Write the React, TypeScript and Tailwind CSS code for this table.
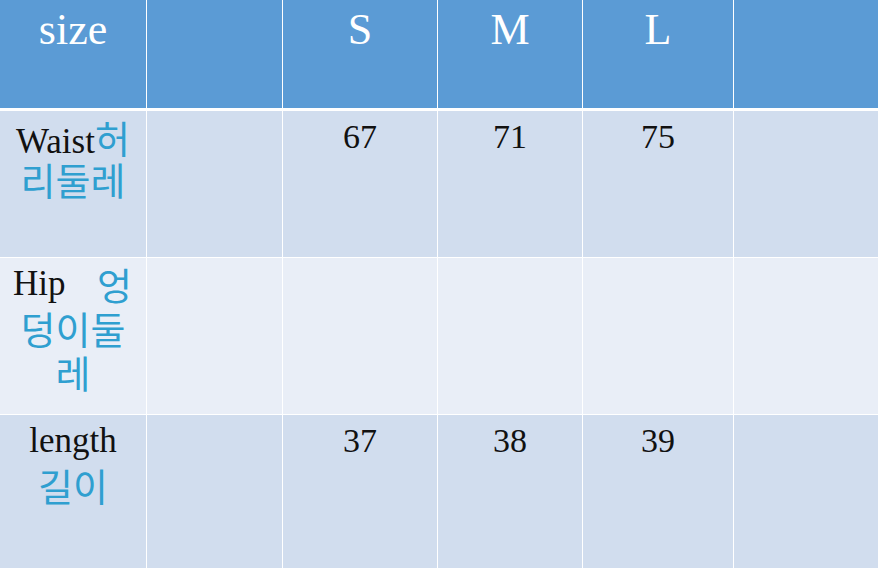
const COLS = 'grid grid-cols-[146px_135px_154px_144px_150px_1fr] gap-x-px';

const serif = "font-['Liberation_Serif','Times_New_Roman',serif]";
const kr = "font-['Noto_Sans_CJK_KR',sans-serif] text-[38px] text-[#2f9fd0]";

interface RowProps {
  label: React.ReactNode;
  values: string[];
  bg: string;
  height: string;
}

function BodyRow({ label, values, bg, height }: RowProps) {
  return (
    <div className={`${COLS} ${height}`}>
      <div className={`${bg} pt-[4px] text-center text-[35px] leading-[44px] text-[#111]`}>{label}</div>
      <div className={bg} />
      {values.map((v, i) => (
        <div key={i} className={`${bg} pt-[4px] text-center text-[34px] leading-[44px] text-[#111] ${serif}`}>
          {v}
        </div>
      ))}
      <div className={bg} />
    </div>
  );
}

export default function App() {
  const header = ['size', '', 'S', 'M', 'L', ''];

  return (
    <div className="flex h-[568px] w-[878px] flex-col overflow-hidden bg-white">
      <div className={`${COLS} mb-[3px] h-[108px]`}>
        {header.map((h, i) => (
          <div
            key={i}
            className={`bg-[#5b9bd5] pt-[8px] text-center text-[44px] leading-[44px] text-white ${serif}`}
          >
            {h}
          </div>
        ))}
      </div>

      <div className="flex flex-1 flex-col gap-px">
        <BodyRow
          bg="bg-[#d1ddee]"
          height="h-[146px]"
          values={['67', '71', '75']}
          label={
            <>
              <div className="h-[42px]">
                <span className={serif}>Waist</span>
                <span className={kr}>허</span>
              </div>
              <div className={kr}>리둘레</div>
            </>
          }
        />
        <BodyRow
          bg="bg-[#e9eef7]"
          height="h-[156px]"
          values={['', '', '']}
          label={
            <>
              <div className="flex justify-between pl-[13px] pr-[14px]">
                <span className={serif}>Hip</span>
                <span className={kr}>엉</span>
              </div>
              <div className={kr}>덩이둘</div>
              <div className={kr}>레</div>
            </>
          }
        />
        <BodyRow
          bg="bg-[#d1ddee]"
          height="flex-1"
          values={['37', '38', '39']}
          label={
            <>
              <div className={serif}>length</div>
              <div className={kr}>길이</div>
            </>
          }
        />
      </div>
    </div>
  );
}
